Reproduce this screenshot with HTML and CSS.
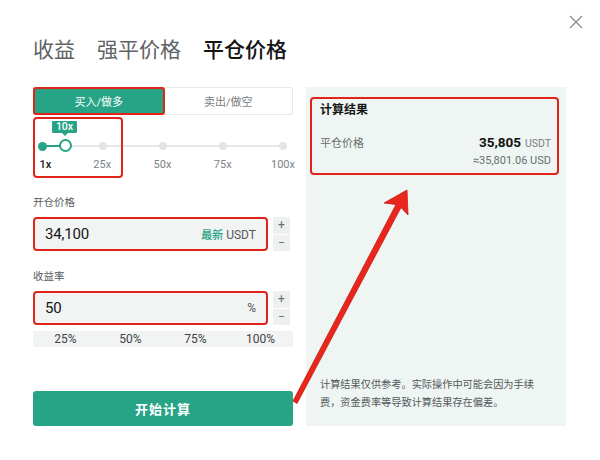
FILE: index.html
```html
<!DOCTYPE html>
<html lang="zh-CN">
<head>
<meta charset="utf-8">
<title>计算器</title>
<link rel="stylesheet" href="styles.css">
</head>
<body>
<div class="modal">
  <header class="header">
    <nav class="tabs">
      <span class="tab">收益</span>
      <span class="tab">强平价格</span>
      <span class="tab active">平仓价格</span>
    </nav>
    <button class="close" aria-label="关闭">
      <svg width="14" height="14" viewBox="0 0 14 14"><path d="M1 1L13 13M13 1L1 13" stroke="#8a8a8a" stroke-width="1.3" fill="none"/></svg>
    </button>
  </header>

  <main class="main">
    <section class="left">
      <div class="side-toggle">
        <div class="side active">买入/做多</div>
        <div class="side">卖出/做空</div>
      </div>

      <div class="slider">
        <div class="dots">
          <span class="dot on"></span>
          <span class="dot"></span>
          <span class="dot"></span>
          <span class="dot"></span>
          <span class="dot"></span>
        </div>
        <div class="marks">
          <span class="mark cur"><span>1x</span></span>
          <span class="mark"><span>25x</span></span>
          <span class="mark"><span>50x</span></span>
          <span class="mark"><span>75x</span></span>
          <span class="mark"><span>100x</span></span>
        </div>
        <span class="handle"></span>
        <span class="tip">10x</span>
        <span class="mark-box"></span>
      </div>

      <div class="field-label first">开仓价格</div>
      <div class="input-row">
        <div class="input">
          <span class="value">34,100</span>
          <span class="suffix"><span class="latest">最新</span> USDT</span>
        </div>
        <div class="stepper"><span>+</span><span>−</span></div>
      </div>

      <div class="field-label second">收益率</div>
      <div class="input-row">
        <div class="input">
          <span class="value">50</span>
          <span class="suffix">%</span>
        </div>
        <div class="stepper"><span>+</span><span>−</span></div>
      </div>

      <div class="percents">
        <span>25%</span><span>50%</span><span>75%</span><span>100%</span>
      </div>

      <button class="calc">开始计算</button>
    </section>

    <section class="right">
      <div class="result">
        <div class="result-title">计算结果</div>
        <div class="result-row">
          <span class="result-label">平仓价格</span>
          <span class="result-value"><b>35,805</b> <small>USDT</small></span>
        </div>
        <div class="result-sub">≈35,801.06 USD</div>
      </div>
      <p class="note">计算结果仅供参考。实际操作中可能会因为手续<br>费，资金费率等导致计算结果存在偏差。</p>
    </section>
  </main>

  <svg class="arrow" width="600" height="460" viewBox="0 0 600 460">
    <polygon points="407,190 408,215 401,207.5 297,403.5 293,401 396,204.5 384,203" fill="#e9261c" stroke="#c91d14" stroke-width="0.8" stroke-linejoin="round"/>
  </svg>
</div>
</body>
</html>
```

FILE: styles.css
```css
* { box-sizing: border-box; }

html, body {
  margin: 0;
  padding: 0;
  background: #ffffff;
}

body {
  font-family: Roboto, "Noto Sans CJK SC", sans-serif;
  color: #1b1b1b;
}

.modal {
  position: relative;
  width: 600px;
  height: 460px;
  overflow: hidden;
}

/* header */
.header {
  display: flex;
  justify-content: space-between;
  align-items: flex-start;
  height: 87px;
  padding: 15px 16px 0 33px;
}

.tabs {
  display: flex;
  gap: 22px;
  margin-top: 22px;
}

.tab {
  font-size: 21px;
  line-height: 26px;
  color: #5f6366;
}

.tab.active {
  color: #141414;
  font-weight: 500;
}

.close {
  border: 0;
  background: none;
  padding: 0;
  margin-right: 1px;
  width: 14px;
  height: 14px;
  display: block;
}

.close svg { display: block; }

/* main */
.main {
  display: flex;
  gap: 13px;
  padding-left: 33px;
  height: 339px;
}

.left {
  width: 260px;
  display: flex;
  flex-direction: column;
}

/* buy/sell toggle */
.side-toggle {
  display: flex;
  height: 28px;
  border: 1px solid #e7e9e9;
  border-radius: 2px;
}

.side {
  flex: 1;
  display: flex;
  align-items: center;
  justify-content: center;
  font-size: 11px;
  color: #7a7e80;
}

.side.active {
  margin: -1px 0 -1px -1px;
  background: #27a386;
  color: #ffffff;
  border: 2px solid #e2231a;
  border-radius: 3px;
}

/* slider */
.slider {
  position: relative;
  height: 63px;
  padding-top: 26px;
}

.dots {
  display: flex;
  justify-content: space-between;
  align-items: center;
  height: 10px;
  margin: 0 5px 0 4px;
  background:
    linear-gradient(#27a386, #27a386) 5px 50% / 22px 2px no-repeat,
    linear-gradient(#e6e8e8, #e6e8e8) 5px 50% / 241px 2px no-repeat;
}

.dot {
  width: 8px;
  height: 8px;
  margin: 0 1px;
  border-radius: 50%;
  background: #e3e5e5;
}

.dot.on {
  width: 9px;
  height: 9px;
  background: #27a386;
}

.marks {
  display: flex;
  justify-content: space-between;
  margin: 7px 5px 0 4px;
}

.mark {
  width: 10px;
  display: flex;
  justify-content: center;
  font-size: 11px;
  line-height: 14px;
  color: #7d8184;
  white-space: nowrap;
}

.mark.cur {
  color: #1b1b1b;
  font-weight: 500;
  padding-left: 7px;
}

.handle {
  position: absolute;
  left: 26px;
  top: 24px;
  width: 13px;
  height: 13px;
  border-radius: 50%;
  border: 2px solid #27a386;
  background: #ffffff;
}

.tip {
  position: absolute;
  left: 19px;
  top: 6px;
  width: 25px;
  height: 12px;
  background: #27a386;
  color: #ffffff;
  font-size: 10.5px;
  font-weight: 500;
  line-height: 12px;
  text-align: center;
  border-radius: 1px;
}

.tip::after {
  content: "";
  position: absolute;
  left: 50%;
  bottom: -3px;
  margin-left: -3px;
  border-left: 3px solid transparent;
  border-right: 3px solid transparent;
  border-top: 3px solid #27a386;
}

.mark-box {
  position: absolute;
  left: 0;
  top: 2px;
  width: 90px;
  height: 61px;
  border: 2px solid #e2231a;
  border-radius: 4px;
}

/* fields */
.field-label {
  font-size: 10.5px;
  line-height: 16px;
  color: #55595c;
}

.field-label.first { margin-top: 17px; }
.field-label.second { margin-top: 18px; }

.input-row {
  display: flex;
  gap: 5px;
  margin-top: 6px;
  height: 34px;
}

.input {
  width: 235px;
  display: flex;
  align-items: center;
  justify-content: space-between;
  padding: 0 10px 0 10px;
  background: #f2f3f3;
  border: 2px solid #e2231a;
  border-radius: 4px;
}

.value {
  font-size: 15px;
  color: #151515;
  letter-spacing: -0.2px;
}

.suffix {
  font-size: 12px;
  color: #55595c;
}

.latest {
  color: #27a386;
  font-size: 11px;
  font-weight: 500;
}

.stepper {
  width: 17px;
  display: flex;
  flex-direction: column;
  gap: 1px;
}

.stepper span {
  flex: 1;
  display: flex;
  align-items: center;
  justify-content: center;
  background: #eef0f0;
  color: #6a6e70;
  font-size: 12px;
  line-height: 1;
}

.percents {
  display: grid;
  grid-template-columns: repeat(4, 1fr);
  justify-items: center;
  margin-top: 6px;
  height: 16px;
  background: #f2f3f3;
  font-size: 12px;
  line-height: 16px;
  color: #3f4346;
}

.calc {
  margin-top: auto;
  height: 35px;
  border: 0;
  border-radius: 3px;
  background: #27a386;
  color: #ffffff;
  font-family: Roboto, "Noto Sans CJK SC", sans-serif;
  font-size: 13px;
  font-weight: 700;
  letter-spacing: 1px;
}

/* right panel */
.right {
  width: 260px;
  background: #eef5f3;
  display: flex;
  flex-direction: column;
  padding: 10px 7px 14px 4px;
}

.result {
  height: 78px;
  border: 2px solid #e2231a;
  border-radius: 4px;
  padding: 3px 6px 0 8px;
}

.result-title {
  font-size: 12px;
  font-weight: 700;
  line-height: 16px;
  color: #151515;
}

.result-row {
  display: flex;
  justify-content: space-between;
  align-items: baseline;
  margin-top: 15px;
  line-height: 18px;
}

.result-label {
  font-size: 11px;
  color: #6a6e70;
}

.result-value b {
  font-size: 13.5px;
  font-weight: 700;
  color: #111111;
}

.result-value small {
  font-size: 10.5px;
  color: #7a7e80;
}

.result-sub {
  text-align: right;
  font-size: 11px;
  line-height: 16px;
  color: #6a6e70;
}

.note {
  margin: auto 0 0 10px;
  font-size: 10.2px;
  line-height: 18px;
  color: #55595c;
  white-space: nowrap;
}

/* annotation arrow */
.arrow {
  position: absolute;
  left: 0;
  top: 0;
  pointer-events: none;
}
```
